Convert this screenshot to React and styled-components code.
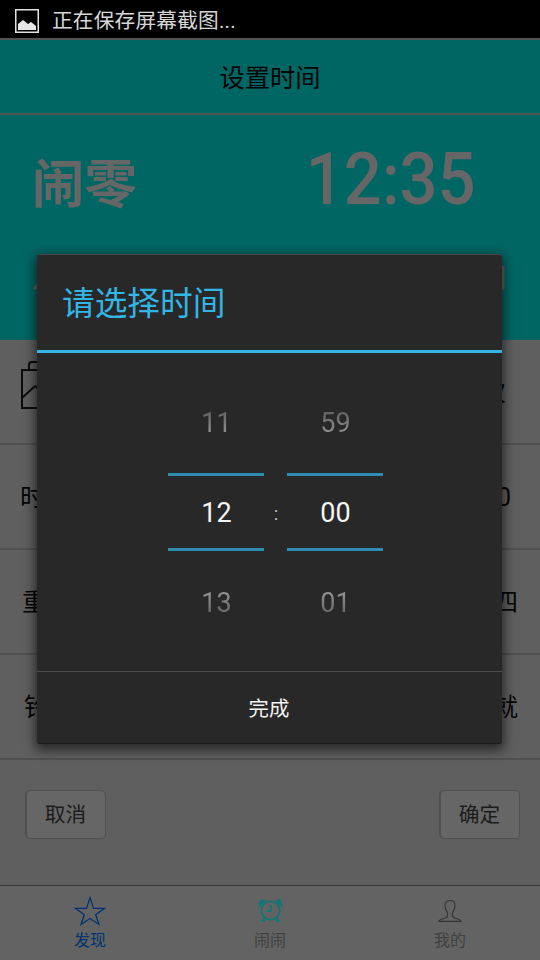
import React from 'react';
import styled, { createGlobalStyle } from 'styled-components';

const Global = createGlobalStyle`
  * { box-sizing: border-box; }
  body { margin: 0; background: #606060; font-family: Roboto, "Noto Sans CJK SC", sans-serif; }
`;
const Screen = styled.main`
  position: relative; width: 540px; height: 960px; overflow: hidden;
  display: flex; flex-direction: column; background: #5f5f5f; color: #050505;
`;
const StatusBar = styled.div`
  height: 38px; flex: none; background: #000; color: #d6d6d6; display: flex; align-items: center;
  padding: 4px 0 0 15px; gap: 12px; font-size: 20.7px; line-height: 33px; letter-spacing: .18px;
`;
const Title = styled.header`
  height: 77px; flex: none; border-top: 2px solid #535353; border-bottom: 2px solid #535353;
  background: #006664; text-align: center; font-size: 25.3px; line-height: 77px;
`;
const Hero = styled.section`
  height: 225px; flex: none; background: #006664; color: #666;
  display: flex; flex-direction: column; gap: 45px; padding: 24px 33px 0 32px;
`;
const HeroLine = styled.div`
  display: flex; justify-content: space-between; align-items: center;
  height: ${p => p.$h}px; font-size: ${p => p.$size}px; line-height: 1; font-weight: 500;
`;
const City = styled.strong`font-size: 52.5px; font-weight: 700; line-height: 1; margin-top: 10px;`;
const Clock = styled.strong`
  font-size: 72px; font-weight: 500; line-height: 1; margin-right: 31px;
  transform: scaleX(.93); transform-origin: right;
`;
const Row = styled.div`
  height: ${p => p.$h || 105}px; flex: none; border-bottom: 2px solid #505050;
  display: flex; align-items: center; justify-content: space-between;
  padding: 2px ${p => p.$right}px 0 ${p => p.$left}px; font-size: 25px; line-height: 30px;
  svg { margin-bottom: 16px; }
`;
const Actions = styled.div`
  height: 125px; flex: none; display: flex; justify-content: space-between; padding: 30px 20px 0 25px;
`;
const Button = styled.button`
  width: 81px; height: 49px; border: 1.5px solid #505050; border-left-width: 2px; border-radius: 5px;
  background: #666; color: #1c1c1c; font: 20.7px/44px Roboto, "Noto Sans CJK SC", sans-serif; padding: 0 1px 0 0;
`;
const Tabs = styled.nav`
  flex: 1; display: grid; grid-template-columns: repeat(3, 1fr);
  border-top: 1px solid #353535; background: #636363;
`;
const Tab = styled.div`
  display: flex; flex-direction: column; align-items: center; padding-top: 9px;
  color: ${p => p.$active ? '#00336f' : '#404040'}; font-size: 16px; line-height: 27px;
  svg { height: 32px; width: 34px; flex: none; }
`;
const Dialog = styled.section`
  position: absolute; left: 37px; top: 254px; width: 465px; height: 490px;
  background: #282828; border-radius: 3px; border-top: 1px solid #484848; border-bottom: 1px solid #1b1b1b;
  box-shadow: 0 4px 12px 2px rgba(0,0,0,.6); display: flex; flex-direction: column;
`;
const DialogTitle = styled.h2`
  margin: 0; height: 98px; border-bottom: 3px solid #33b5e5; color: #33b5e5;
  padding-left: 25px; font-size: 32.7px; font-weight: 400; line-height: 99px;
`;
const Picker = styled.div`
  height: 318px; display: flex; padding: 30px 0 0 131px;
`;
const Wheel = styled.div`
  width: 96px; font-size: 27px; text-align: center; color: #f5f5f5;
`;
const Near = styled.div`
  height: 90px; line-height: ${p => p.$after ? 104 : 80}px; padding-left: 1px;
  color: transparent; background: linear-gradient(${p => p.$after ? '#999 42%, #5b5b5b 76%' : '#5b5b5b 28%, #999 60%'});
  background-clip: text; -webkit-background-clip: text;
`;
const Selected = styled.div`
  height: 78px; border-top: 3px solid #308db1; border-bottom: 3px solid #308db1; line-height: 75px; padding-left: 1px;
`;
const Colon = styled.div`width: 23px; padding-left: 1px; text-align: center; color: #bbb; font-size: 19px; line-height: 261px;`;
const Done = styled.div`
  height: 72px; border-top: 1px solid #4b4b4b; text-align: center; color: #f3f3f3; font-size: 20.4px; line-height: 75px; padding-right: 1px;
`;

const ImageIcon = () => (
  <svg width="25" height="24" viewBox="0 0 25 24"><rect x=".75" y=".75" width="22.5" height="22.5" fill="none" stroke="#e2e2e2" strokeWidth="1.5" /><path d="M3 21v-6l5-4 5 4 3-2 5 4v4z" fill="#e8e8e8" /></svg>
);
const BriefIcon = () => (
  <svg width="54" height="50" viewBox="0 0 54 50" fill="none" stroke="#0c0c0c" strokeWidth="2"><path d="M2 10h50v38H2zM9 9V5q0-3 3-3h30q3 0 3 3v4M2 38l12-11q2-2 4 2 10 12 18 2t16 0" /></svg>
);
const StarIcon = () => (
  <svg viewBox="0 0 34 32" fill="none" stroke="#00336f" strokeWidth="1.3"><path d="M17 2.8 20.5 13.4H31.5L22.7 19.8 26 29.5 17 23.5 8 29.5 11.3 19.8 2.5 13.4h11z" /></svg>
);
const AlarmIcon = () => (
  <svg viewBox="0 0 34 32" fill="none" stroke="#147575" strokeWidth="1.8"><circle cx="17.500" cy="15.500" r="9.200" /><path d="m12 22.500-3 3.500h3m11-3.500 3 3.500h-3M18 10v6h-4" /><path d="m6.500 10.500 5-5q-5-2-5 5zm22 0-5-5q5-2 5 5z" fill="#147575" /></svg>
);
const UserIcon = () => (
  <svg viewBox="0 0 34 32" fill="none" stroke="#353535" strokeWidth="1.2"><path d="M17 5.500c-4 0-5.500 2.500-4.900 6.500.3 3 1.700 4.300 2.400 5.500v4c-.7 2.500-8 1.500-8.500 4.900h22c-.5-3.400-7.800-2.400-8.500-4.900v-4c.7-1.200 2.100-2.500 2.400-5.500.6-4-.9-6.500-4.900-6.500z" /></svg>
);

export default function App() {
  return (
    <Screen>
      <Global />
      <StatusBar><ImageIcon /><span>正在保存屏幕截图...</span></StatusBar>
      <Title>设置时间</Title>
      <Hero>
        <HeroLine $h={82}><City>闹零</City><Clock>12:35</Clock></HeroLine>
        <HeroLine $h={26} $size={27}><span>八</span><span>周</span></HeroLine>
      </Hero>
      <Row $left={20} $right={34}><BriefIcon /><span>一次</span></Row>
      <Row $left={20} $right={29}><span>时间</span><span>12:00</span></Row>
      <Row $left={22} $right={22}><span>重复</span><span>周四</span></Row>
      <Row $left={24} $right={22}><span>铃声</span><span>成就</span></Row>
      <Actions><Button>取消</Button><Button>确定</Button></Actions>
      <Tabs>
        <Tab $active><StarIcon />发现</Tab>
        <Tab><AlarmIcon />闹闹</Tab>
        <Tab><UserIcon />我的</Tab>
      </Tabs>
      <Dialog>
        <DialogTitle>请选择时间</DialogTitle>
        <Picker>
          <Wheel><Near>11</Near><Selected>12</Selected><Near $after>13</Near></Wheel>
          <Colon>:</Colon>
          <Wheel><Near>59</Near><Selected>00</Selected><Near $after>01</Near></Wheel>
        </Picker>
        <Done>完成</Done>
      </Dialog>
    </Screen>
  );
}
